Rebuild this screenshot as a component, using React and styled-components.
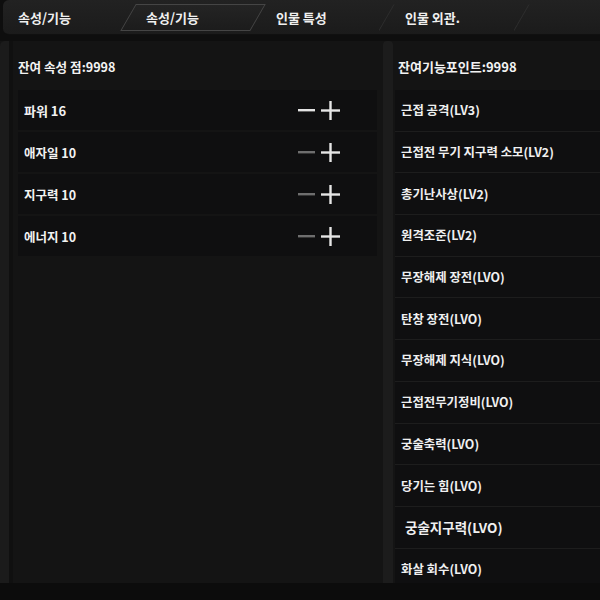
import React from 'react'
import styled, { createGlobalStyle } from 'styled-components'

const Global = createGlobalStyle`
    html, body {
        margin: 0;
        padding: 0;
        background: #0d0d0d;
    }
    body {
        font-family: "Noto Sans CJK KR", "Noto Sans", sans-serif;
        color: #ececec;
    }
`;

const stats = [
    { name: '파워 16', active: true },
    { name: '애자일 10' },
    { name: '지구력 10' },
    { name: '에너지 10' },
]

const skills = [
    { name: '근접 공격(LV3)' },
    { name: '근접전 무기 지구력 소모(LV2)' },
    { name: '총기난사상(LV2)' },
    { name: '원격조준(LV2)' },
    { name: '무장해제 장전(LVO)' },
    { name: '탄창 장전(LVO)' },
    { name: '무장해제 지식(LVO)' },
    { name: '근접전무기정비(LVO)' },
    { name: '궁술축력(LVO)' },
    { name: '당기는 힘(LVO)' },
    { name: '궁술지구력(LVO)', big: true },
    { name: '화살 회수(LVO)' },
]

function Minus({ bright }) {
    return (
        <svg width="18" height="18" viewBox="0 0 18 18">
            <rect x="0" y="8" width="17" height="2.4" fill={bright ? '#e4e4e4' : '#6e6e6e'} />
        </svg>
    )
}

function Plus() {
    return (
        <svg width="19" height="19" viewBox="0 0 19 19">
            <rect x="0" y="8.3" width="19" height="2.4" fill="#e6e6e6" />
            <rect x="8.3" y="0" width="2.4" height="19" fill="#e6e6e6" />
        </svg>
    )
}

export default function App() {
    return (
        <>
            <Global />
            <Screen>
                <TabBar>
                    <FirstTab>속성/기능</FirstTab>
                    <Tab width={130} active>
                        <TabText>속성/기능</TabText>
                    </Tab>
                    <Tab width={129}>
                        <TabText>인물 특성</TabText>
                    </Tab>
                    <Tab width={135}>
                        <TabText>인물 외관.</TabText>
                    </Tab>
                </TabBar>
                <Body>
                    <SideStrip />
                    <LeftPanel>
                        <Heading>잔여 속성 점:9998</Heading>
                        <StatList>
                            {stats.map((s, i) => (
                                <StatRow key={i}>
                                    <StatName big={s.active}>{s.name}</StatName>
                                    <Controls>
                                        <Minus bright={s.active} />
                                        <Plus />
                                    </Controls>
                                </StatRow>
                            ))}
                        </StatList>
                    </LeftPanel>
                    <Divider />
                    <RightPanel>
                        <Heading right>잔여기능포인트:9998</Heading>
                        <SkillList>
                            {skills.map((s, i) => (
                                <SkillRow key={i}>
                                    <SkillName big={s.big}>{s.name}</SkillName>
                                </SkillRow>
                            ))}
                        </SkillList>
                    </RightPanel>
                </Body>
                <Footer />
            </Screen>
        </>
    )
}

const Screen = styled.div`
    width: 600px;
    height: 600px;
    display: flex;
    flex-direction: column;
    overflow: hidden;
    background: #0e0e0e;
`;
const TabBar = styled.div`
    height: 35px;
    margin-left: 3px;
    flex-shrink: 0;
    display: flex;
    align-items: center;
    background: linear-gradient(#222222, #1b1b1b);
    border-radius: 6px 0 0 6px;
    border-bottom: 1px solid #101010;
    box-sizing: border-box;
`;
const FirstTab = styled.div`
    width: 125px;
    padding-left: 15px;
    box-sizing: border-box;
    font-size: 13px;
    font-weight: 700;
    color: #f0f0f0;
`;
const Tab = styled.div`
    position: relative;
    width: ${p => p.width}px;
    height: 27px;
    display: flex;
    align-items: center;
    margin-top: 1px;
    &::before {
        content: '';
        position: absolute;
        inset: 0;
        transform: skewX(-30deg);
        border: 1px solid ${p => p.active ? '#454545' : 'transparent'};
        border-right-color: ${p => p.active ? '#454545' : '#2e2e2e'};
        background: ${p => p.active ? 'linear-gradient(#242424, #1c1c1c)' : 'transparent'};
    }
`;
const TabText = styled.span`
    position: relative;
    padding-left: 18px;
    font-size: 13px;
    font-weight: 700;
    color: #f0f0f0;
`;
const Body = styled.div`
    flex: 1;
    display: flex;
    margin-top: 6px;
    min-height: 0;
    background: #141414;
`;
const SideStrip = styled.div`
    width: 9px;
    flex-shrink: 0;
    background: #1b1b1b;
    border-right: 4px solid #101010;
    border-radius: 5px 0 0 0;
`;
const LeftPanel = styled.div`
    width: 370px;
    flex-shrink: 0;
    padding: 0 6px 0 5px;
    box-sizing: border-box;
`;
const Heading = styled.div`
    height: 49px;
    display: flex;
    align-items: center;
    padding-left: ${p => p.right ? '5px' : '0'};
    padding-top: 2px;
    box-sizing: border-box;
    font-size: ${p => p.right ? '13px' : '12.6px'};
    font-weight: 700;
    color: #f2f2f2;
`;
const StatList = styled.div`
    display: flex;
    flex-direction: column;
    gap: 2px;
`;
const StatRow = styled.div`
    height: 40px;
    display: flex;
    align-items: center;
    justify-content: space-between;
    padding: 0 37px 0 6px;
    background: #0f0f10;
`;
const StatName = styled.span`
    font-size: ${p => p.big ? '13px' : '12.5px'};
    font-weight: 700;
    color: #f2f2f2;
`;
const Controls = styled.div`
    display: flex;
    align-items: center;
    gap: 5px;
`;
const Divider = styled.div`
    width: 10px;
    flex-shrink: 0;
    background: #1c1c1c;
    border-radius: 4px 4px 0 0;
`;
const RightPanel = styled.div`
    flex: 1;
    min-width: 0;
    display: flex;
    flex-direction: column;
`;
const SkillList = styled.div`
    flex: 1;
    overflow: hidden;
    padding-left: 2px;
`;
const SkillRow = styled.div`
    height: 40.7px;
    display: flex;
    align-items: center;
    padding-left: 6px;
    background: #0f0f10;
    border-bottom: 1px solid #1d1d1d;
`;
const SkillName = styled.span`
    font-size: ${p => p.big ? '13.5px' : '12.4px'};
    padding-left: ${p => p.big ? '4px' : '0'};
    font-weight: 700;
    color: #f0f0f0;
`;
const Footer = styled.div`
    height: 17px;
    flex-shrink: 0;
    background: #0c0c0c;
`;
